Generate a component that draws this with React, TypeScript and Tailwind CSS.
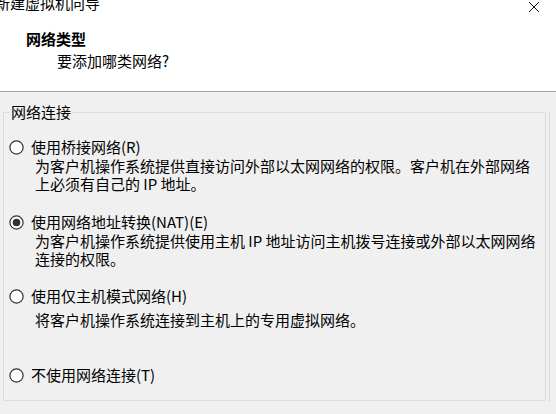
import React from 'react';

const font = { fontFamily: '"Noto Sans CJK SC", "Noto Sans", sans-serif' };

function Radio({ checked }: { checked?: boolean }) {
    return (
        <svg width="15" height="15" viewBox="0 0 15 15" className="shrink-0 w-[15px] h-[15px]">
            <circle cx="7.5" cy="7.5" r="6.6" fill="#ffffff" stroke="#333333" strokeWidth="1.2" />
            {checked && <circle cx="7.5" cy="7.5" r="3.8" fill="#333333" />}
        </svg>
    );
}

interface OptionProps {
    label: string;
    checked?: boolean;
    lines?: string[];
    className?: string;
    descClassName?: string;
}

function Option({ label, checked, lines = [], className = '', descClassName = '' }: OptionProps) {
    return (
        <div className={`flex flex-col ${className}`}>
            <div className="flex items-center gap-[7px] ml-[5px] h-[18px]">
                <Radio checked={checked} />
                <span className="text-[15px] leading-[18px] text-black whitespace-nowrap">{label}</span>
            </div>
            {lines.length > 0 && (
                <div className={`ml-[31px] flex flex-col ${descClassName}`}>
                    {lines.map(l => (
                        <span key={l} className="text-[15px] leading-[18px] text-black whitespace-nowrap">{l}</span>
                    ))}
                </div>
            )}
        </div>
    );
}

export default function App() {
    return (
        <div className="w-[556px] h-[414px] overflow-hidden bg-[#f0f0f0] relative" style={font}>
            {/* header */}
            <div className="h-[92px] bg-white border-b border-[#a0a0a0] flex flex-col">
                <div className="flex items-center justify-between -mt-[6px] h-[18px]">
                    <span className="-ml-[5px] text-[15px] leading-[18px] text-black">新建虚拟机向导</span>
                    <svg width="12" height="12" viewBox="0 0 12 12" className="mr-[16px] mt-[8px]">
                        <path d="M1 1 L11 11 M11 1 L1 11" stroke="#111" strokeWidth="1" fill="none" />
                    </svg>
                </div>
                <div className="mt-[18px] ml-[26px] text-[15px] leading-[18px] font-bold text-black">网络类型</div>
                <div className="mt-[4px] ml-[57px] text-[15px] leading-[18px] text-black">要添加哪类网络?</div>
            </div>

            {/* group */}
            <div className="flex">
                <fieldset className="ml-[3px] mt-[11px] w-[543px] h-[298px] border border-[#dcdcdc] flex flex-col">
                    <legend className="ml-[6px] px-[1px] text-[15px] leading-[18px] text-black">网络连接</legend>
                    <Option
                        className="mt-[17px]"
                        descClassName="mt-[1px]"
                        label="使用桥接网络(R)"
                        lines={[
                            '为客户机操作系统提供直接访问外部以太网网络的权限。客户机在外部网络',
                            '上必须有自己的 IP 地址。',
                        ]}
                    />
                    <Option
                        className="mt-[20px]"
                        descClassName="mt-[1px]"
                        checked
                        label="使用网络地址转换(NAT)(E)"
                        lines={[
                            '为客户机操作系统提供使用主机 IP 地址访问主机拨号连接或外部以太网网络',
                            '连接的权限。',
                        ]}
                    />
                    <Option
                        className="mt-[19px]"
                        descClassName="mt-[6px]"
                        label="使用仅主机模式网络(H)"
                        lines={['将客户机操作系统连接到主机上的专用虚拟网络。']}
                    />
                    <Option className="mt-[37px]" label="不使用网络连接(T)" />
                </fieldset>
                <div className="ml-[3px] mt-[20px] w-px h-[290px] bg-[#dcdcdc]" />
            </div>
        </div>
    );
}
